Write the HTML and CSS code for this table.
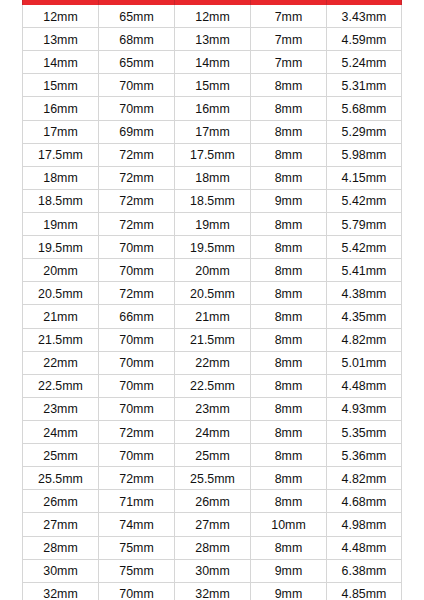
FILE: index.html
```html
<!DOCTYPE html>
<html lang="en">
<head>
<meta charset="utf-8">
<title>Size table</title>
<link rel="stylesheet" href="styles.css">
</head>
<body>
<div class="sheet">
  <div class="head">
    <div class="hcell"></div><div class="hcell"></div><div class="hcell"></div><div class="hcell"></div><div class="hcell"></div>
  </div>
  <div class="grid">
    <div class="cell">12mm</div><div class="cell">65mm</div><div class="cell">12mm</div><div class="cell">7mm</div><div class="cell">3.43mm</div>
    <div class="cell">13mm</div><div class="cell">68mm</div><div class="cell">13mm</div><div class="cell">7mm</div><div class="cell">4.59mm</div>
    <div class="cell">14mm</div><div class="cell">65mm</div><div class="cell">14mm</div><div class="cell">7mm</div><div class="cell">5.24mm</div>
    <div class="cell">15mm</div><div class="cell">70mm</div><div class="cell">15mm</div><div class="cell">8mm</div><div class="cell">5.31mm</div>
    <div class="cell">16mm</div><div class="cell">70mm</div><div class="cell">16mm</div><div class="cell">8mm</div><div class="cell">5.68mm</div>
    <div class="cell">17mm</div><div class="cell">69mm</div><div class="cell">17mm</div><div class="cell">8mm</div><div class="cell">5.29mm</div>
    <div class="cell">17.5mm</div><div class="cell">72mm</div><div class="cell">17.5mm</div><div class="cell">8mm</div><div class="cell">5.98mm</div>
    <div class="cell">18mm</div><div class="cell">72mm</div><div class="cell">18mm</div><div class="cell">8mm</div><div class="cell">4.15mm</div>
    <div class="cell">18.5mm</div><div class="cell">72mm</div><div class="cell">18.5mm</div><div class="cell">9mm</div><div class="cell">5.42mm</div>
    <div class="cell">19mm</div><div class="cell">72mm</div><div class="cell">19mm</div><div class="cell">8mm</div><div class="cell">5.79mm</div>
    <div class="cell">19.5mm</div><div class="cell">70mm</div><div class="cell">19.5mm</div><div class="cell">8mm</div><div class="cell">5.42mm</div>
    <div class="cell">20mm</div><div class="cell">70mm</div><div class="cell">20mm</div><div class="cell">8mm</div><div class="cell">5.41mm</div>
    <div class="cell">20.5mm</div><div class="cell">72mm</div><div class="cell">20.5mm</div><div class="cell">8mm</div><div class="cell">4.38mm</div>
    <div class="cell">21mm</div><div class="cell">66mm</div><div class="cell">21mm</div><div class="cell">8mm</div><div class="cell">4.35mm</div>
    <div class="cell">21.5mm</div><div class="cell">70mm</div><div class="cell">21.5mm</div><div class="cell">8mm</div><div class="cell">4.82mm</div>
    <div class="cell">22mm</div><div class="cell">70mm</div><div class="cell">22mm</div><div class="cell">8mm</div><div class="cell">5.01mm</div>
    <div class="cell">22.5mm</div><div class="cell">70mm</div><div class="cell">22.5mm</div><div class="cell">8mm</div><div class="cell">4.48mm</div>
    <div class="cell">23mm</div><div class="cell">70mm</div><div class="cell">23mm</div><div class="cell">8mm</div><div class="cell">4.93mm</div>
    <div class="cell">24mm</div><div class="cell">72mm</div><div class="cell">24mm</div><div class="cell">8mm</div><div class="cell">5.35mm</div>
    <div class="cell">25mm</div><div class="cell">70mm</div><div class="cell">25mm</div><div class="cell">8mm</div><div class="cell">5.36mm</div>
    <div class="cell">25.5mm</div><div class="cell">72mm</div><div class="cell">25.5mm</div><div class="cell">8mm</div><div class="cell">4.82mm</div>
    <div class="cell">26mm</div><div class="cell">71mm</div><div class="cell">26mm</div><div class="cell">8mm</div><div class="cell">4.68mm</div>
    <div class="cell">27mm</div><div class="cell">74mm</div><div class="cell">27mm</div><div class="cell">10mm</div><div class="cell">4.98mm</div>
    <div class="cell">28mm</div><div class="cell">75mm</div><div class="cell">28mm</div><div class="cell">8mm</div><div class="cell">4.48mm</div>
    <div class="cell">30mm</div><div class="cell">75mm</div><div class="cell">30mm</div><div class="cell">9mm</div><div class="cell">6.38mm</div>
    <div class="cell">32mm</div><div class="cell">70mm</div><div class="cell">32mm</div><div class="cell">9mm</div><div class="cell">4.85mm</div>
  </div>
</div>
</body>
</html>
```
FILE: styles.css
```css
html, body {
  margin: 0;
  padding: 0;
  background: #ffffff;
}
body {
  font-family: "Liberation Sans", Arial, sans-serif;
  color: #111111;
  overflow: hidden;
}
.sheet {
  width: 380px;
  margin-left: 22px;
}
.head {
  display: grid;
  grid-template-columns: repeat(5, 1fr);
  height: 5px;
  background: #e8272c;
}
.hcell {
  border-left: 1px solid #c9242a;
}
.hcell:last-child {
  border-right: 1px solid #c9242a;
}
.grid {
  display: grid;
  grid-template-columns: repeat(5, 1fr);
}
.cell {
  box-sizing: border-box;
  height: 23.12px;
  border-left: 1px solid #d6d6d6;
  border-bottom: 1px solid #d6d6d6;
  display: flex;
  align-items: center;
  justify-content: center;
  font-size: 12.4px;
  padding-top: 1px;
}
.cell:nth-child(5n) {
  border-right: 1px solid #d6d6d6;
}
```
